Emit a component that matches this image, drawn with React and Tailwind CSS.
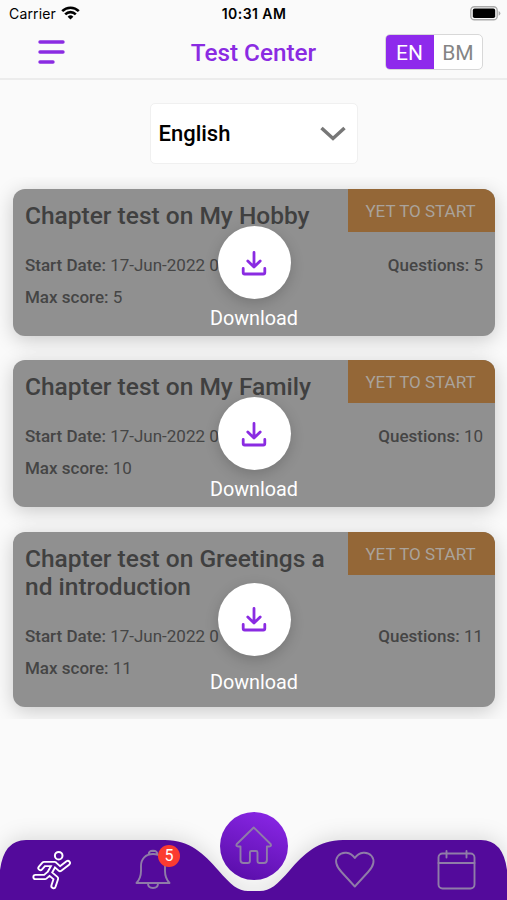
const tests = [
    { title: ["Chapter test on My Hobby"], count: 5 },
    { title: ["Chapter test on My Family"], count: 10 },
    { title: ["Chapter test on Greetings a", "nd introduction"], count: 11 },
];

const StatusBar = () => {
    return (
        <div className="grid grid-cols-3 items-center h-[26px] pl-[9px] pr-[6px] pt-[1px] text-black font-['Inter',sans-serif]">
            <div className="flex items-center gap-[5px] text-[14px] tracking-[0.15px]">
                Carrier
                <svg className="mb-[2px]" width="19" height="14" viewBox="0 0 19 14" fill="none" stroke="#000" strokeWidth="2.6">
                    <path d="M1.2 5.2a11.8 11.8 0 0 1 16.6 0" />
                    <path d="M4.2 8.3a7.5 7.5 0 0 1 10.6 0" />
                    <path d="M9.5 13.6 6.6 10.7a4.1 4.1 0 0 1 5.8 0Z" fill="#000" stroke="none" />
                </svg>
            </div>
            <div className="pr-[2px] text-center text-[14px] tracking-[0.45px] font-semibold whitespace-nowrap">10:31 AM</div>
            <svg className="justify-self-end mb-[1px]" width="31" height="15" viewBox="0 0 31 15">
                <rect x="0.8" y="0.8" width="26.4" height="13" rx="3.6" fill="#fafafa" stroke="#aaa" strokeWidth="1.4" />
                <rect x="2.8" y="2.6" width="22.4" height="9.4" rx="1.8" fill="#000" />
                <path d="M28.6 5v4.8q1.8-.9 1.8-2.4T28.6 5Z" fill="#aaa" />
            </svg>
        </div>
    );
};

const Header = () => {
    return (
        <div className="grid grid-cols-3 items-center h-[54px] pl-[38px] pr-[24px] border-b-2 border-[#ececec]">
            <svg width="27" height="24" viewBox="0 0 27 24" stroke="#8a2be2" strokeWidth="3.4" strokeLinecap="round">
                <path d="M2 2h23M2 12h23M2 22h13" />
            </svg>
            <h1 className="justify-self-center ml-[-14px] pt-[2px] text-[24.3px] font-medium text-[#8a2be2] whitespace-nowrap">Test Center</h1>
            <div className="justify-self-end flex w-[98px] h-[36px] rounded-[5px] border border-[#d8d8d8] bg-white overflow-hidden text-[21px]">
                <div className="flex items-center justify-center w-[48px] pt-[3px] pr-[1px] bg-[#8e2aec] text-white">EN</div>
                <div className="flex items-center justify-center w-[48px] pt-[3px] text-[#858585]">BM</div>
            </div>
        </div>
    );
};

const TestCard = ({ title, count }) => {
    return (
        <div className="relative shrink-0 rounded-[12px] bg-[#909090] overflow-hidden shadow-[0_4px_20px_rgba(0,0,0,0.2)]">
            <div className="flex justify-between items-start">
                <h2 className="pl-[12px] pt-[13px] text-[24.5px] leading-[28px] font-medium text-[#404040] whitespace-nowrap">
                    {title.map((line) => (
                        <div key={line}>{line}</div>
                    ))}
                </h2>
                <div className="flex items-center justify-center w-[147px] h-[43px] mb-[-2px] pt-[2px] pr-[2px] shrink-0 bg-[#946737] text-[17px] text-[#aaa39c]">
                    YET TO START
                </div>
            </div>
            <div className="flex justify-between px-[12px] pt-[24px] text-[17px] leading-[22px] text-[#454545]">
                <div><b className="font-medium">Start Date:</b> 17-Jun-2022 0</div>
                <div><b className="font-medium">Questions:</b> {count}</div>
            </div>
            <div className="px-[12px] pt-[10px] pb-[28px] text-[17px] leading-[22px] text-[#454545]">
                <b className="font-medium">Max score:</b> {count}
            </div>
            <div className="absolute inset-0 grid grid-rows-[1fr_73px_1fr] justify-items-center">
                <div className="row-start-2 flex items-center justify-center size-[73px] rounded-full bg-white shadow-[0_4px_14px_rgba(0,0,0,0.18)]">
                    <svg width="26" height="26" viewBox="0 0 26 26" fill="none" stroke="#8a2be2" strokeWidth="2.8" strokeLinecap="round" strokeLinejoin="round">
                        <path d="M13 2.5v14.5M6.8 11l6.2 6 6.2-6M2.2 18.5v4q0 1.5 1.5 1.5h18.6q1.5 0 1.5-1.5v-4" />
                    </svg>
                </div>
                <div className="row-start-3 self-center pt-[3px] text-[19.8px] leading-[24px] text-white">Download</div>
            </div>
        </div>
    );
};

const BottomNav = () => {
    return (
        <div className="relative h-[90px] shrink-0">
            <svg className="absolute inset-0 drop-shadow-[0_-3px_10px_rgba(0,0,0,0.12)]" width="507" height="90" viewBox="0 0 507 90" fill="#530a9b">
                <path d="M0 90V60Q4 30 26 30H165C190 30 204 44 218 60C231 75 238 81 248 81H260C270 81 277 75 290 60C304 44 318 30 343 30H481Q503 30 507 60V90Z" />
            </svg>
            <svg className="absolute inset-0" width="507" height="90" viewBox="0 0 507 90" fill="none" strokeLinecap="round" strokeLinejoin="round">
                <defs>
                    <linearGradient id="home" x1="0.7" y1="0" x2="0.3" y2="1">
                        <stop stopColor="#8826e4" />
                        <stop offset="1" stopColor="#5a0eaa" />
                    </linearGradient>
                </defs>
                <circle cx="254" cy="36" r="34" fill="url(#home)" />
                <g stroke="#8f7ca8" strokeWidth="1.9">
                    <path d="M253.7 17.5 236.8 34q-1.3 2.3 1.5 2.5h2.2V50q0 3 3 3h4.2q2.2 0 2.2-2V42.5q0-1.5 1.5-1.5h4.6q1.5 0 1.5 1.5V51q0 2 2.2 2h4.2q3 0 3-3V36.5h2.2q2.8-.2 1.5-2.5Z" />
                    <path d="M136.5 73q4.5-5 4.5-12v-5c0-7 4.5-12 12-12s12 5 12 12v5q0 7 4.5 12ZM148.8 44q-.5-3 4.2-3.2 4.7.2 4.2 3.2M148 73.5q0 4.5 5 4.5t5-4.5" />
                    <path d="m354.8 76.5-13.3-14.5c-5-5.5-7.5-11-3.5-16 4-4.8 12.5-4.5 16.800 2 4.300-6.500 12.800-6.800 16.800-2 4 5 1.500 10.500-3.500 16Z" />
                    <rect x="438.5" y="43.5" width="36" height="35" rx="4" />
                    <path d="M438.5 53h36M446.5 41v6.5M466.5 41v6.5" />
                </g>
                {/* thick white strokes with a thinner core on top give the hollow runner */}
                <g strokeWidth="6.2" stroke="#fff">
                    <path d="M40.5 58 44 54h10.5L49.5 63l6.5 5.5-2.5 7.5M49 63.5l-4 3.5h-9.5M55 54.5l5 4.5 7.8-6" />
                </g>
                <g strokeWidth="2.4" stroke="#530a9b">
                    <path d="M40.5 58 44 54h10.5L49.5 63l6.5 5.5-2.5 7.5M49 63.5l-4 3.5h-9.5M55 54.5l5 4.5 7.8-6" />
                </g>
                <circle cx="58.7" cy="45.7" r="3.8" stroke="#fff" strokeWidth="2" fill="#530a9b" />
            </svg>
            <div className="absolute left-[158px] top-[35px] flex items-center justify-center size-[22px] rounded-full bg-[#fb3b30] text-[16px] text-white">5</div>
        </div>
    );
};

const App = () => {
    return (
        <div className="flex flex-col w-[507px] h-[900px] overflow-hidden bg-[#fafafa] font-['Roboto',sans-serif]">
            <StatusBar />
            <Header />
            <div className="flex items-center justify-between self-center w-[208px] h-[61px] mt-[23px] mb-[13px] pl-[8px] pr-[9px] shrink-0 rounded-[5px] border border-[#f0f0f0] bg-white">
                <span className="text-[22px] font-medium text-black">English</span>
                <svg className="mr-[2px] mt-[1px]" width="26" height="16" viewBox="0 0 26 16" fill="none" stroke="#777" strokeWidth="3.5">
                    <path d="m1.5 2 11.5 10.5L24.5 2" />
                </svg>
            </div>
            <div className="flex flex-col gap-[24.4px] shrink-0 pl-[13px] pr-[12px] pt-[12px] pb-[12px] overflow-hidden">
                {tests.map((test) => (
                    <TestCard key={test.title[0]} title={test.title} count={test.count} />
                ))}
            </div>
            <div className="grow" />
            <BottomNav />
        </div>
    );
};

export default App;
